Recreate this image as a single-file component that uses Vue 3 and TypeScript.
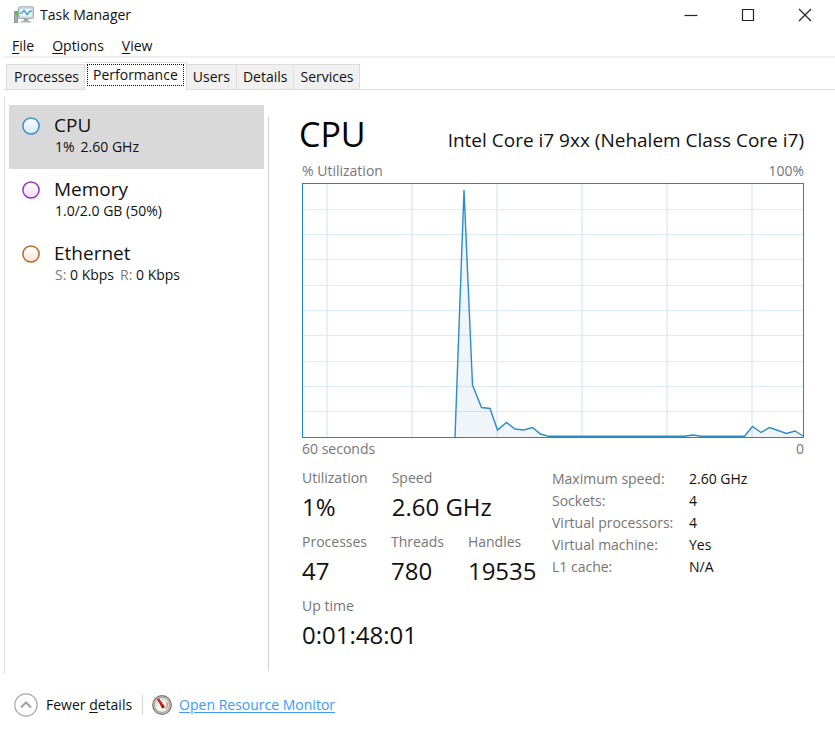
<script setup lang="ts">
import { computed, ref } from 'vue'

interface Resource {
  id: string
  name: string
  parts: { label?: string; value: string }[]
  stroke: string
  fill: string
}

const menus = [
  { key: 'F', rest: 'ile' },
  { key: 'O', rest: 'ptions' },
  { key: 'V', rest: 'iew' },
]
const tabs = ['Processes', 'Performance', 'Users', 'Details', 'Services']
const activeTab = ref('Performance')

const resources: Resource[] = [
  { id: 'cpu', name: 'CPU', parts: [{ value: '1%' }, { value: '2.60 GHz' }], stroke: '#3c8fc4', fill: '#d3e8f7' },
  { id: 'memory', name: 'Memory', parts: [{ value: '1.0/2.0 GB (50%)' }], stroke: '#9a35b8', fill: '#f1dcf8' },
  {
    id: 'ethernet',
    name: 'Ethernet',
    parts: [{ label: 'S:', value: '0 Kbps' }, { label: 'R:', value: '0 Kbps' }],
    stroke: '#b5692a',
    fill: '#fbe6d6',
  },
]
const activeResource = ref('cpu')

const statRows = [
  [{ label: 'Utilization', value: '1%' }, { label: 'Speed', value: '2.60 GHz' }],
  [{ label: 'Processes', value: '47' }, { label: 'Threads', value: '780' }, { label: 'Handles', value: '19535' }],
  [{ label: 'Up time', value: '0:01:48:01' }],
]
const facts = [
  ['Maximum speed:', '2.60 GHz'],
  ['Sockets:', '4'],
  ['Virtual processors:', '4'],
  ['Virtual machine:', 'Yes'],
  ['L1 cache:', 'N/A'],
]

const gridX = [24, 109, 194, 279, 364, 449]
const gridY = [25, 50, 75, 101, 126, 151, 177, 202, 227]
const samples: [number, number][] = [
  [152, 253], [161, 6], [169.5, 201], [178.5, 223.5], [187, 224.5], [194.5, 246], [203.5, 238.5], [212, 245],
  [220.5, 246], [229.5, 243.5], [237.5, 250], [245.5, 252.3], [381, 252.3], [390, 251], [398, 252.3],
  [441.5, 252.3], [449.5, 242.5], [458, 248.5], [466.5, 243.5], [475, 246.5], [483.5, 249.5], [492, 247], [500, 252],
]
const line = computed(() => samples.map(p => p.join(',')).join(' '))
const area = computed(() => `${line.value} 500,253 152,253`)
</script>

<template>
  <div class="window">
    <header class="titlebar">
      <svg class="app-icon" viewBox="0 0 20 18" aria-hidden="true">
        <rect x="0.5" y="5.5" width="3" height="11" fill="#a9b0b3" stroke="#8f9699" />
        <rect x="1" y="6" width="2" height="3" fill="#5bc653" />
        <rect x="4.5" y="0.8" width="15" height="11.7" rx="0.8" fill="#d5dadd" stroke="#a7acaf" />
        <rect x="6" y="2.3" width="12" height="8.6" fill="#eef8fd" stroke="#b3cfdd" stroke-width="0.6" />
        <path d="M6 7.5 L7.8 7 L10 4.3 L13.2 8.7 L15.5 5.4 L18 5.2" fill="none" stroke="#2f97d0" stroke-width="1.2" />
        <path d="M10 12.8h4l.7 2.4h-5.4z" fill="#9ea3a6" />
        <path d="M7 15h10v1.7H7z" fill="#b9bdbf" />
      </svg>
      <h1 class="title">Task Manager</h1>
      <div class="controls">
        <button type="button" aria-label="Minimize">
          <svg viewBox="0 0 14 14"><path d="M0.5 7.5h13" /></svg>
        </button>
        <button type="button" aria-label="Maximize">
          <svg viewBox="0 0 14 14"><path d="M1.5 1.5h11v11h-11z" /></svg>
        </button>
        <button type="button" aria-label="Close">
          <svg viewBox="0 0 14 14"><path d="M1 1l12 12M13 1L1 13" /></svg>
        </button>
      </div>
    </header>

    <nav class="menubar">
      <button v-for="m in menus" :key="m.key" type="button"><u>{{ m.key }}</u>{{ m.rest }}</button>
    </nav>

    <div class="tabs" role="tablist">
      <button
        v-for="t in tabs"
        :key="t"
        type="button"
        role="tab"
        class="tab"
        :class="{ active: t === activeTab }"
        :aria-selected="t === activeTab"
        @click="activeTab = t"
      ><span>{{ t }}</span></button>
    </div>

    <main class="content">
      <aside class="sidebar">
        <button
          v-for="r in resources"
          :key="r.id"
          type="button"
          class="resource"
          :class="{ selected: r.id === activeResource }"
          @click="activeResource = r.id"
        >
          <svg class="dot" viewBox="0 0 18 18" aria-hidden="true">
            <defs>
              <linearGradient :id="`fill-${r.id}`" x1="0" y1="0" x2="0" y2="1">
                <stop offset="0" stop-color="#ffffff" />
                <stop offset="1" :stop-color="r.fill" />
              </linearGradient>
            </defs>
            <circle cx="9" cy="9" r="8.1" :fill="`url(#fill-${r.id})`" :stroke="r.stroke" stroke-width="1.5" />
          </svg>
          <span class="resource-text">
            <span class="resource-name">{{ r.name }}</span>
            <span class="resource-detail">
              <span v-for="(p, i) in r.parts" :key="i"><span v-if="p.label" class="muted">{{ p.label }}&nbsp;</span>{{ p.value }}</span>
            </span>
          </span>
        </button>
      </aside>

      <section class="detail">
        <div class="heading">
          <h2>CPU</h2>
          <p>Intel Core i7 9xx (Nehalem Class Core i7)</p>
        </div>
        <div class="scale"><span>% Utilization</span><span>100%</span></div>
        <svg class="chart" viewBox="0 0 500 253" preserveAspectRatio="none" role="img" aria-label="CPU utilization">
          <g class="grid">
            <line v-for="x in gridX" :key="`x${x}`" :x1="x" :x2="x" y1="0" y2="253" class="column" />
            <line v-for="y in gridY" :key="`y${y}`" x1="0" x2="500" :y1="y + 0.5" :y2="y + 0.5" />
          </g>
          <polygon :points="area" class="area" />
          <polyline :points="line" class="trace" />
        </svg>
        <div class="scale below"><span>60 seconds</span><span>0</span></div>

        <div class="numbers">
          <div class="stats">
            <dl v-for="(row, i) in statRows" :key="i" class="stat-row">
              <div v-for="s in row" :key="s.label">
                <dt>{{ s.label }}</dt>
                <dd>{{ s.value }}</dd>
              </div>
            </dl>
          </div>
          <dl class="facts">
            <template v-for="f in facts" :key="f[0]">
              <dt>{{ f[0] }}</dt>
              <dd>{{ f[1] }}</dd>
            </template>
          </dl>
        </div>
      </section>
    </main>

    <footer class="footer">
      <button type="button" class="fewer">
        <svg viewBox="0 0 24 24" aria-hidden="true">
          <circle cx="12" cy="12" r="11.2" fill="#fff" stroke="#a6a6a6" stroke-width="1.2" />
          <path d="M7 14.5l5-5 5 5" fill="none" stroke="#a0a0a0" stroke-width="2" />
        </svg>
        <span>Fewer <u>d</u>etails</span>
      </button>
      <a class="monitor" href="#">
        <svg viewBox="0 0 20 20" aria-hidden="true">
          <circle cx="10" cy="10" r="9.3" fill="#c4c4c0" stroke="#777775" stroke-width="1.2" />
          <circle cx="10" cy="10" r="7.3" fill="#f6f5ee" stroke="#96958f" stroke-width="0.8" />
          <path d="M5 11a5.2 5.2 0 0 1 2-5.2M10 4.7a5.2 5.2 0 0 1 3.6 1.6" fill="none" stroke="#b9b6a8" stroke-width="1" stroke-dasharray="1.4 1" />
          <path d="M14.3 7a5.2 5.2 0 0 1-.8 6.8" fill="none" stroke="#e9966a" stroke-width="1.5" />
          <path d="M4.8 4l2.3-.4 5.2 7.5-.4 2.2-2.2-.7z" fill="#d31a1f" />
          <circle cx="11" cy="11.8" r="1.5" fill="#8f2022" />
        </svg>
        <span>Open Resource Monitor</span>
      </a>
    </footer>
  </div>
</template>

<style>
body {
  margin: 0;
  background: #fff;
}
</style>

<style scoped>
.window {
  min-height: 100vh;
  box-sizing: border-box;
  display: flex;
  flex-direction: column;
  background: #fff;
  color: #111;
  font: 14px/20px "Open Sans", "Noto Sans", sans-serif;
}
button {
  margin: 0;
  padding: 0;
  border: 0;
  background: none;
  color: inherit;
  font: inherit;
  text-align: left;
}
h1, h2, p, dl, dt, dd {
  margin: 0;
  font-weight: 400;
}
u {
  text-underline-offset: 2px;
}
svg {
  display: block;
}
.muted {
  color: #7c7c7c;
}
.titlebar {
  display: flex;
  align-items: center;
  height: 29px;
  padding: 0 23px 0 14px;
}
.app-icon {
  width: 20px;
  height: 18px;
}
.title {
  margin-left: 6px;
  font-size: 14px;
}
.controls {
  display: flex;
  gap: 43px;
  margin-left: auto;
}
.controls svg {
  width: 14px;
  height: 14px;
  fill: none;
  stroke: #222;
  stroke-width: 1.2;
}
.menubar {
  display: flex;
  align-items: center;
  gap: 18px;
  height: 27px;
  margin-left: 4px;
  padding: 7px 0 0 8px;
  box-sizing: border-box;
}
.tabs {
  display: flex;
  align-items: flex-end;
  margin-left: 4px;
  padding: 4px 0 0 2px;
  border-top: 2px solid #f0f0f0;
  border-bottom: 1px solid #dcdcdc;
}
.tab {
  height: 25px;
  padding: 0 6px;
  border: 1px solid #dcdcdc;
  border-left-width: 0;
  border-bottom: 0;
  background: #f0f0f0;
}
.tab:first-child {
  padding: 0 5px 0 7px;
  border-left-width: 1px;
}
.tab.active {
  height: 28px;
  margin-bottom: -1px;
  padding: 0 2px 3px;
  background: #fff;
}
.tab.active span {
  display: block;
  padding: 0 5px;
  border: 1px dotted #111;
}
.content {
  display: flex;
  margin: 6px 0 0 4px;
  border-left: 1px solid #e5e5e5;
  padding-bottom: 4px;
}
.sidebar {
  flex: 0 0 255px;
  padding: 9px 4px 0;
}
.resource {
  display: flex;
  width: 100%;
  height: 64px;
  padding: 10px 13px 0;
  box-sizing: border-box;
}
.resource.selected {
  background: #d9d9d9;
}
.dot {
  width: 18px;
  height: 18px;
  margin-top: 2px;
}
.resource-text {
  display: block;
  margin-left: 14px;
}
.resource-name {
  display: block;
  font-size: 19px;
  line-height: 21px;
}
.resource-detail {
  display: flex;
  gap: 6px;
  padding-left: 1px;
  line-height: 22px;
}
.detail {
  flex: 1;
  min-width: 0;
  margin-top: 21px;
  padding: 0 31px 11px 33px;
  border-left: 1px solid #d0d0d0;
}
.heading {
  display: flex;
  align-items: baseline;
  justify-content: space-between;
  height: 44px;
  margin-top: -6px;
}
.heading h2 {
  margin-left: -3px;
  font-size: 34px;
  line-height: 46px;
  color: #000;
}
.heading p {
  font-size: 19px;
}
.scale {
  display: flex;
  justify-content: space-between;
  padding: 6px 0 2px;
  color: #767676;
}
.scale.below {
  padding: 1px 0 0;
}
.chart {
  width: 100%;
  height: 255px;
  box-sizing: border-box;
  border: 1px solid #1f86c4;
}
.grid line {
  stroke: #dcecf6;
  stroke-width: 1;
}
.grid .column {
  stroke: #e5f0f8;
  stroke-width: 2;
}
.area {
  fill: #1a70b0;
  fill-opacity: 0.07;
}
.trace {
  fill: none;
  stroke: #2c8cc6;
  stroke-width: 1.4;
}
.numbers {
  display: flex;
  margin-top: 9px;
}
.stats {
  flex: 0 0 250px;
}
.stat-row {
  display: flex;
  gap: 24px;
  height: 64px;
}
dt {
  color: #767676;
}
.stat-row dd {
  font-size: 24px;
  line-height: 38px;
}
.facts {
  display: grid;
  grid-template-columns: 137px auto;
  align-content: start;
  line-height: 22px;
}
.footer {
  display: flex;
  align-items: center;
  padding: 18px 14px 13px;
}
.fewer {
  display: flex;
  align-items: center;
  gap: 8px;
}
.fewer svg {
  width: 24px;
  height: 24px;
}
.monitor {
  display: flex;
  align-items: center;
  gap: 7px;
  margin-left: 10px;
  padding-left: 9px;
  border-left: 1px solid #d5d5d5;
  color: #3b99fb;
  text-decoration: none;
}
.monitor span {
  text-decoration: underline;
  text-underline-offset: 2px;
}
.monitor svg {
  width: 20px;
  height: 20px;
}
</style>
